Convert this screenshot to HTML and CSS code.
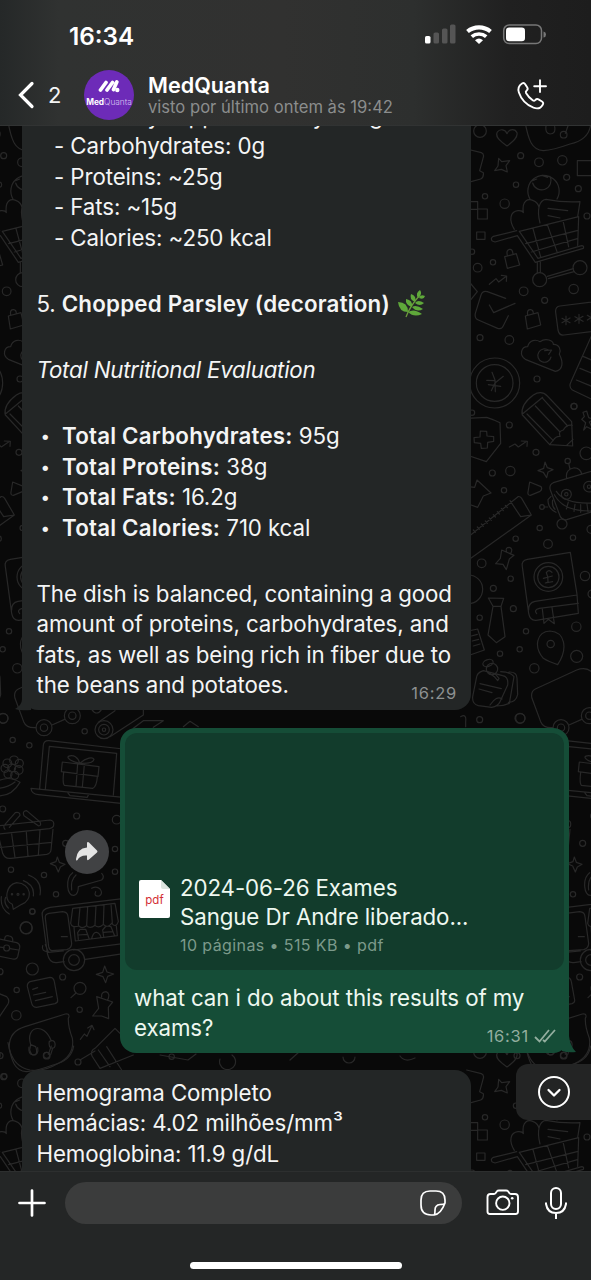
FILE: index.html
```html
<!DOCTYPE html>
<html lang="pt-BR">
<head>
<meta charset="utf-8">
<title>MedQuanta</title>
<link rel="stylesheet" href="styles.css">
</head>
<body>
<div class="phone">
  <svg class="wallpaper" viewBox="0 0 591 1280" aria-hidden="true">
    <defs>
      <g id="tile">
        <g transform="translate(460 120) scale(.33333)">
          <path d="M195 5C205 60 215 90 250 92Q280 90 330 72Q385 60 392 15M258 18Q255 40 270 42Q288 42 284 20M325 15 316 40"/>
          <circle cx="60" cy="33" r="19"/><circle cx="311" cy="44" r="10"/>
          <path d="M141 78C115 60 105 48 112 36C120 25 136 28 141 41C148 24 166 26 171 38C174 52 160 64 141 78Z"/>
          <path d="M20 87 64 98Q74 102 69 115L59 152 70 158Q72 172 62 177L25 187M116 115 125 125 149 122 138 137 142 156 124 148 104 152 114 138Z"/>
          <circle cx="182" cy="107" r="9"/><circle cx="237" cy="127" r="13"/><circle cx="307" cy="121" r="14"/><circle cx="168" cy="194" r="8"/><circle cx="320" cy="172" r="9"/><circle cx="355" cy="206" r="9"/><circle cx="75" cy="229" r="8"/><circle cx="134" cy="251" r="14"/><circle cx="381" cy="288" r="9"/>
          <path d="M352 122H430V167H352ZM53 267H82V297H53ZM24 245H53V268H24M50 336H75V358H50Z"/>
          <path d="M210 237A47 47 0 1 1 291 237M218 189A28 28 0 1 0 270 169M218 182 230 177M246 166 263 172"/>
          <path d="M163 328C146 300 150 275 174 272Q188 271 190 278C185 240 205 235 220 242Q234 248 237 262M240 309C230 270 237 240 258 238Q310 248 360 245L353 290M264 265 323 272M264 287 300 294"/>
          <path d="M170 332 100 349Q90 355 97 363L105 366 172 347 226 427 370 385Q373 377 365 377L234 415 178 334 356 290 353 376M197 371 354 331M214 396 352 356M219 326 242 411M262 314 291 395M309 302 326 381M232 427V458M241 425V457M262 469 340 446M265 476 342 455"/>
          <circle cx="239" cy="479" r="21"/><circle cx="360" cy="443" r="21"/>
          <path d="M134 410 169 401 179 435 142 445ZM142 407Q138 389 149 388Q158 387 159 403M196 588 234 578 242 615 202 627ZM203 585Q200 568 212 569Q220 570 220 581M88 493 108 476 116 486 139 469M124 466 140 468 139 484"/>
          <circle cx="36" cy="395" r="8"/><circle cx="53" cy="443" r="13"/><circle cx="99" cy="427" r="8"/><circle cx="191" cy="514" r="13"/><circle cx="341" cy="507" r="14"/><circle cx="254" cy="541" r="9"/><circle cx="60" cy="653" r="9"/><circle cx="148" cy="660" r="13"/>
          <path d="M28 486 52 515 32 540M137 535 82 515Q68 511 63 525L46 580Q43 595 55 600L113 625Q126 629 130 617L145 587M88 555 101 578 165 550M430 542 300 558Q285 560 287 577L294 630Q298 648 312 645L430 630"/>
          <path d="M318 588V614M306 595 330 608M330 594 306 608M357 583V610M345 590 369 604M369 589 345 604M394 578V606M382 586 406 600M406 585 382 600"/>
          <path d="M196 718C177 705 183 680 203 680C208 660 227 657 240 665C258 652 280 662 280 673C298 672 304 690 298 703C310 725 310 750 286 754ZM266 691A20 20 0 1 0 273 711M254 692 275 690 266 703"/>
          <circle cx="104" cy="789" r="75"/><circle cx="104" cy="789" r="55"/><path d="M96 757 105 780 106 815M130 769 105 789 94 812M80 781 105 782M85 794 122 799"/>
          <circle cx="231" cy="777" r="9"/><circle cx="342" cy="859" r="9"/><circle cx="36" cy="878" r="8"/>
          <path d="M400 635 333 785Q325 801 337 810L410 845M369 709 430 735M360 745 420 770M349 780 410 805"/>
        </g>
        <g transform="translate(460 400) scale(.33333)">
          <path d="M187 45Q180 15 220-15Q245-30 262-12L335 65 338 138 269 134 190 48ZM201 42 280 122M226 18 300 96M248-5 323 78M190 40 248-8M269 134 280 120Q288 108 300 109Q294 93 310 90Q320 72 337 76M319 137 339 118"/>
          <path d="M20 55 80 52Q104 60 120 68L122 130 79 185 20 165M61 93 80 94 81 108 101 110V124L83 127 82 144 64 145 62 130 43 128 42 113 60 111Z"/>
          <circle cx="148" cy="75" r="9"/><circle cx="342" cy="19" r="9"/><circle cx="379" cy="160" r="19"/><circle cx="228" cy="157" r="9"/><circle cx="97" cy="219" r="9"/><circle cx="151" cy="213" r="14"/><circle cx="132" cy="271" r="8"/><circle cx="323" cy="183" r="8"/>
          <path d="M148 141 165 132 175 141 200 124M184 123 202 124 201 139M255 186 262 203 279 209 264 216 260 233 250 217 234 212 251 205ZM209 246 243 260Q248 268 240 274L211 286Q202 286 204 276ZM369 37 380 33 386 53 402 58 388 66 400 90 380 80 371 90 377 68 365 58 373 50Z"/>
          <path d="M25 260 44 262 51 240 93 279 70 288 53 322 25 312M20 415 174 290Q180 288 185 295L214 345 25 480M150 302 182 350 214 345M40 390 46 397M52 381 58 388M64 372 70 379M76 363 82 370M88 354 94 361M100 344 106 351M112 335 118 342M124 325 130 332M136 316 142 323"/>
          <path d="M430 203 280 248Q266 255 271 270L301 350Q308 362 320 359L430 325M320 235Q315 210 340 204Q360 202 365 222M326 190 330 207M273 289 264 299Q263 325 288 337M278 300Q275 320 285 328M252 321H263M283 284Q315 345 430 330M289 274Q320 320 430 306M325 306 319 327M345 313 342 334M362 314V337M381 312 384 335"/>
          <circle cx="319" cy="283" r="15"/><circle cx="319" cy="283" r="5"/><circle cx="387" cy="260" r="16"/><circle cx="387" cy="260" r="5"/><circle cx="246" cy="321" r="7"/><circle cx="306" cy="372" r="15"/><circle cx="239" cy="384" r="8"/><circle cx="339" cy="413" r="8"/><circle cx="264" cy="432" r="13"/><circle cx="167" cy="416" r="8"/><circle cx="393" cy="388" r="12"/>
          <path d="M125 450 162 466 148 477 139 509 129 493 107 491 121 475ZM140 456Q135 442 148 442Q161 446 151 462"/>
          <circle cx="65" cy="490" r="13"/><circle cx="152" cy="536" r="8"/><circle cx="100" cy="565" r="9"/><circle cx="375" cy="528" r="14"/><circle cx="396" cy="582" r="12"/><circle cx="160" cy="626" r="9"/><circle cx="59" cy="653" r="8"/><circle cx="198" cy="694" r="8"/><circle cx="349" cy="680" r="14"/><circle cx="350" cy="769" r="18"/><circle cx="120" cy="761" r="8"/><circle cx="179" cy="748" r="8"/><circle cx="223" cy="805" r="14"/><circle cx="25" cy="568" r="43"/>
          <path d="M187 500Q183 482 202 478L331 457 351 583 355 640 228 661Q210 662 206 640L187 500M206 630Q205 608 225 604L351 585M230 641Q220 630 238 625L355 610M247 627 252 670 265 658 283 671 276 622M276 517Q266 506 259 518Q266 532 264 546L256 549 278 545M250 535 277 528"/>
          <circle cx="265" cy="531" r="43"/><circle cx="265" cy="531" r="32"/>
          <path d="M85 594 131 595 123 619H99ZM99 619 84 705 109 728 135 710 123 619M25 693 53 687 73 750 30 765M34 708 52 703M37 723 56 718M40 738 60 732M293 794Q265 785 250 775C220 740 230 695 270 693C315 696 325 745 293 794Z"/>
          <circle cx="272" cy="732" r="11"/>
          <path d="M70 812Q50 818 49 835L38 890Q36 912 55 917L95 922Q115 918 120 905L143 855Q146 830 128 827L70 812M122 815Q150 815 162 830L148 910Q130 918 110 918M147 816Q171 815 171 835L173 884Q167 908 145 907M60 851 124 866M57 867 96 878M90 915Q110 885 126 897"/>
          <ellipse cx="84" cy="789" rx="16" ry="10" transform="rotate(-20 84 789)"/><circle cx="96" cy="807" r="17"/><path d="M85 817 103 830 113 842 117 835 105 821"/>
          <circle cx="59" cy="959" r="9"/><circle cx="180" cy="955" r="15"/>
          <path d="M2 950Q20 940 17 965V980M279 983Q250 985 242 965L216 895Q211 875 226 867L350 810Q380 798 400 820L450 860M327 975 365 958"/>
          <circle cx="303" cy="983" r="24"/><circle cx="303" cy="983" r="11"/><circle cx="388" cy="947" r="24"/><circle cx="388" cy="947" r="11"/>
        </g>
        <g transform="translate(517 680) scale(.33333)">
          <circle cx="312" cy="149" r="27"/><circle cx="312" cy="149" r="16"/><circle cx="312" cy="149" r="5"/>
          <path d="M295 127 345 92M330 170 430 105V80M275 88Q290 110 305 88M400 145 430 122H490L460 142M550 140 570 124 595 140"/>
          <circle cx="254" cy="154" r="8"/><circle cx="38" cy="180" r="8"/><circle cx="88" cy="196" r="8"/><circle cx="8" cy="387" r="9"/><circle cx="230" cy="408" r="9"/><circle cx="350" cy="419" r="13"/><circle cx="345" cy="507" r="8"/><circle cx="345" cy="575" r="8"/><circle cx="33" cy="569" r="8"/><circle cx="132" cy="585" r="8"/><circle cx="168" cy="643" r="8"/><circle cx="97" cy="694" r="8"/><circle cx="78" cy="743" r="18"/><circle cx="10" cy="115" r="14"/>
          <path d="M119 325 130 195Q132 181 147 182L370 207M136 327 148 199 350 220 340 345M93 325 370 352M93 325Q94 342 115 344L370 371M203 338 210 347 262 352 266 343M187 246 297 260 294 289 184 275ZM191 277Q187 310 193 316L278 325Q290 320 292 290M233 251 228 319M253 254 247 321M239 250C215 245 200 235 205 229C220 222 235 232 239 250C260 232 278 230 282 238C280 248 262 251 239 250"/>
          <circle cx="22" cy="250" r="13"/><circle cx="42" cy="241" r="13"/><circle cx="58" cy="250" r="12"/><circle cx="15" cy="265" r="12"/><circle cx="35" cy="264" r="12"/><circle cx="56" cy="270" r="13"/><circle cx="24" cy="282" r="12"/><circle cx="44" cy="286" r="12"/>
          <path d="M-10 305Q25 285 60 307Q35 350-10 348M-10 325Q20 325 45 306"/>
          <path d="M-10 438 150 420Q163 422 161 435Q161 443 148 446L-10 463M15 448Q8 440 15 433L46 398Q60 395 60 406L28 442M72 407Q66 393 80 392L120 426Q125 437 116 438ZM-5 465 8 520Q15 538 33 535L140 523Q152 520 153 510L159 448M35 462 45 533M79 457 84 530M120 451 115 526M-5 503 155 487"/>
          <path d="M172 531 178 547 195 553 181 561 175 576 167 558 151 551 168 545ZM40 688 37 673C10 660 18 615 50 608C95 610 100 660 65 673ZM70 602Q105 615 100 648M85 585Q128 600 120 645M17 652Q10 670 25 684M4 650Q0 685 28 702"/>
          <circle cx="54" cy="643" r="3"/><circle cx="36" cy="643" r="2"/><circle cx="71" cy="643" r="2"/>
          <path d="M218 578C195 595 200 650 222 646Q235 643 235 620L305 600Q315 590 305 580M228 585Q211 600 215 630M275 625Q290 617 300 627Q310 640 298 648Q280 650 287 635"/>
          <circle cx="197" cy="490" r="9"/>
        </g>
        <g transform="translate(517 900) scale(.33333)">
          <path d="M375-5 150 22Q122 28 127 48L142 160Q148 190 170 188L192 185M256 178 375 160M375 130 220 150M190 153 145 157M128 137Q123 155 145 155L136 134M136 55Q134 42 147 40L188 35Q203 36 204 50L215 130Q215 145 200 149L155 152Q148 150 146 140ZM184 110H202"/>
          <path d="M218 25 345 10 355 65Q348 85 335 70Q322 86 310 73Q296 87 285 76Q270 88 260 77Q245 88 237 78Q215 84 212 70ZM240 22 235 76M263 20 260 76M288 17 285 74M312 14 310 72M333 12 337 70M222 82 226 123 352 107 349 78M235 118 233 98 240 88H257L267 115M275 116Q280 95 290 97Q300 100 303 112M311 110 308 90 318 78 333 80 343 105M235 105 262 103M310 97 338 95"/>
          <circle cx="222" cy="180" r="32"/><circle cx="222" cy="180" r="16"/>
          <circle cx="97" cy="35" r="8"/><circle cx="79" cy="84" r="18"/><circle cx="0" cy="215" r="9"/><circle cx="97" cy="207" r="18"/><circle cx="188" cy="231" r="9"/><circle cx="50" cy="270" r="8"/><circle cx="49" cy="346" r="14"/><circle cx="239" cy="329" r="8"/><circle cx="234" cy="486" r="9"/><circle cx="13" cy="529" r="8"/><circle cx="0" cy="467" r="9"/><circle cx="515" cy="470" r="8"/>
          <path d="M-10 115 50 128Q61 132 59 143L53 170Q50 180 38 177L-10 167M-10 140 12 143M30 146 56 150M14 117Q15 104 28 108Q40 110 38 124"/><circle cx="20" cy="144" r="9"/>
          <path d="M90 245 150 232Q161 232 163 245L173 300Q174 308 165 311L110 322Q98 322 95 310L82 260Q81 249 90 245ZM98 268 113 263M101 285 137 277M106 302 157 290M314 198 321 216 341 222 323 229 317 248 309 230 289 223 308 217Z"/>
          <circle cx="240" cy="265" r="18"/><path d="M228 279 213 293M-10 278 20 290Q30 300 24 312L-5 355M290 290 338 306 325 322 326 356 305 348 278 348 296 325ZM305 291Q303 276 318 275Q332 280 323 300"/>
          <path d="M207 350Q208 339 196 342L75 380Q25 395 28 445Q40 500 90 510Q130 517 175 490Q225 465 217 415Q204 380 205 355ZM92 434C75 380 130 365 153 421M92 434 89 450Q93 468 107 464Q113 455 107 440ZM148 424Q145 438 153 444Q167 447 165 430Q163 418 148 424M158 445 152 464"/><circle cx="140" cy="466" r="9"/>
          <path d="M241 418 253 402 261 409 275 379M263 384 276 376 282 389M276 468Q270 453 285 445L345 385 375 415M276 468 300 505 400 465M295 450 330 500M320 440 365 510"/>
        </g>
      </g>
    </defs>
    <rect width="591" height="1280" fill="#090909"/>
    <g class="doodles">
      <use href="#tile"/>
      <use href="#tile" x="-517"/>
      <use href="#tile" y="921"/>
      <use href="#tile" x="-517" y="921"/>
      <path d="M160 1055l28 5 8-6M220 1059a8 8 0 1 0 12-4M290 1060l9-8M343 1057a6 6 0 0 0 12 0M400 1056q5 7 15 2M80 1060l15-9"/>
    </g>
  </svg>

  <header class="top">
    <div class="status">
      <span class="clock">16:34</span>
      <svg class="status-icons" width="122" height="24" viewBox="0 0 122 24">
        <rect x="1" y="13" width="5.5" height="7.5" rx="1.6" fill="#fff"/>
        <rect x="9.5" y="9.5" width="5.5" height="11" rx="1.6" fill="#555"/>
        <rect x="18" y="5.500" width="5.500" height="15" rx="1.600" fill="#555"/>
        <rect x="26" y="1.500" width="5.500" height="19" rx="1.600" fill="#555"/>
        <path d="M43.500 8.500A18 18 0 0 1 66.500 8.500" fill="none" stroke="#fff" stroke-width="4.200"/>
        <path d="M47.800 13.700A11 11 0 0 1 62.200 13.700" fill="none" stroke="#fff" stroke-width="3.700"/>
        <path d="M51 17.200Q55 13.800 59 17.200L55 21Z" fill="#fff"/>
        <rect x="79.700" y="2" width="37.800" height="18.600" rx="5.500" fill="none" stroke="#777" stroke-width="1.500"/>
        <rect x="82" y="4.500" width="19" height="13.700" rx="3.200" fill="#fff"/>
        <path d="M119.500 8.500Q122 9 122 11.500Q122 14 119.500 14.500Z" fill="#777"/>
      </svg>
    </div>
    <div class="bar">
      <svg class="back" width="18" height="28" viewBox="0 0 18 28"><path d="M14 2.500 2.500 14 14 25.500" fill="none" stroke="#fff" stroke-width="3.200" stroke-linecap="round"/></svg>
      <span class="count">2</span>
      <div class="avatar">
        <svg width="22" height="14" viewBox="0 0 22 14"><path d="M2.500 11 8 3.500M9 11 14.500 3.500M15.500 10.500 18.800 3" fill="none" stroke="#fff" stroke-width="3.700" stroke-linecap="round"/><circle cx="19.300" cy="11" r="2.200" fill="#fff"/></svg>
        <span class="brand"><b>Med</b>Quanta</span>
      </div>
      <div class="who">
        <div class="name">MedQuanta</div>
        <div class="seen">visto por último ontem às 19:42</div>
      </div>
      <svg class="call" width="34" height="34" viewBox="0 0 34 34" fill="none" stroke="#fff" stroke-width="1.900" stroke-linejoin="round" stroke-linecap="round"><path d="M7 5.500Q9 4.300 10.200 6.200L12.300 9.500Q13.300 11.200 11.700 12.500Q10.300 13.800 11 15Q13.500 19.400 18 22.500Q19.200 23.200 20.200 22.200Q21.800 20.500 23.500 21.400L27 23.500Q29 24.700 27.700 26.700Q24.800 32 18.500 29.700Q7.500 25.300 3.900 14.500Q2 8.700 7 5.500ZM25 2.300V14M19.200 8.200H31"/></svg>
    </div>
  </header>

  <main class="chat">
    <section class="bubble in first">
      <p class="line sub cut">- Quantity: Approximately 100g</p>
      <p class="line sub">- Carbohydrates: 0g</p>
      <p class="line sub">- Proteins: ~25g</p>
      <p class="line sub">- Fats: ~15g</p>
      <p class="line sub">- Calories: ~250 kcal</p>
      <p class="line gap item">5. <b>Chopped Parsley (decoration)</b>
        <svg class="herb" width="28" height="28" viewBox="0 0 28 28"><path d="M8 27Q12 16 22 5" stroke="#6c9a3c" stroke-width="1.300" fill="none"/><g fill="#5fa83a"><path d="M20 8Q17 3 22 0Q25 4 20 8Z"/><path d="M17 12Q11 9 13 4Q19 6 17 12Z"/><path d="M21 8Q22 4 27 6Q26 10 21 8Z"/><path d="M17 13Q20 9 26 13Q22 17 17 13Z"/><path d="M14 17Q7 15 8 9Q15 10 14 17Z"/><path d="M14 17Q18 14 25 19Q19 23 14 17Z"/><path d="M10 22Q1 22 0 12Q10 12 10 22Z"/><path d="M10 22Q16 18 24 24Q16 28 10 22Z"/></g></svg></p>
      <p class="line gap"><i>Total Nutritional Evaluation</i></p>
      <ul class="totals">
        <li class="line"><b>Total Carbohydrates:</b> 95g</li>
        <li class="line"><b>Total Proteins:</b> 38g</li>
        <li class="line"><b>Total Fats:</b> 16.2g</li>
        <li class="line"><b>Total Calories:</b> 710 kcal</li>
      </ul>
      <p class="line gap">The dish is balanced, containing a good</p>
      <p class="line">amount of proteins, carbohydrates, and</p>
      <p class="line">fats, as well as being rich in fiber due to</p>
      <div class="last"><p class="line">the beans and potatoes.</p><time class="time">16:29</time></div>
      <svg class="tail-in" width="16" height="22" viewBox="0 0 16 22"><path d="M7 0V10Q7 16 0 20Q5 22 16 21V0Z" fill="#232626"/></svg>
    </section>

    <div class="out-row">
      <span class="forward"><svg width="24" height="22" viewBox="0 0 24 22"><path d="M12 1.500Q13 .5 14 1.500L22 9.500Q23 10.500 22 11.500L14 18.500Q12 20 12 18V14.500Q5 14 2.500 19Q1 20.500 1 18Q2 7.500 12 6.500Z" fill="#e4e4e4"/></svg></span>
      <section class="bubble out">
        <div class="document">
          <svg width="31" height="38" viewBox="0 0 31 38"><path d="M2 0H22L31 9V36Q31 38 29 38H2Q0 38 0 36V2Q0 0 2 0Z" fill="#fff"/><path d="M22 0 31 9H24Q22 9 22 7Z" fill="#dce5df"/><text x="15.500" y="23.500" text-anchor="middle" class="ext">pdf</text></svg>
          <div class="file">
            <div class="file-name">2024-06-26 Exames</div>
            <div class="file-name second">Sangue Dr Andre liberado...</div>
            <div class="meta">10 páginas • 515 KB • pdf</div>
          </div>
        </div>
        <div class="caption">
          <p class="line">what can i do about this results of my</p>
          <div class="last"><p class="line">exams?</p><time class="time sent">16:31 <svg width="22" height="14" viewBox="0 0 22 14" fill="none" stroke="#93ae9f" stroke-width="1.800"><path d="M1 8 5.500 12.500 15 1M9 11 10.800 12.500 21 1"/></svg></time></div>
        </div>
        <svg class="tail-out" width="14" height="22" viewBox="0 0 14 22"><path d="M0 0H7V5Q8 15 14 21Q6 22 0 20Z" fill="#154d37"/></svg>
      </section>
    </div>

    <section class="bubble in lab">
      <p class="line">Hemograma Completo</p>
      <p class="line">Hemácias: 4.02 milhões/mm³</p>
      <p class="line">Hemoglobina: 11.9 g/dL</p>
    </section>
    <div class="jump"><svg width="34" height="34" viewBox="0 0 34 34" fill="none" stroke="#fff" stroke-width="2" stroke-linecap="round" stroke-linejoin="round"><circle cx="17" cy="17" r="15"/><path d="M11.500 15 17 20.500 22.500 15" stroke-width="2.300"/></svg></div>
  </main>

  <footer class="bottom">
    <div class="composer">
      <svg class="plus" width="28" height="28" viewBox="0 0 28 28"><path d="M14 1.500V26.500M1.500 14H26.500" stroke="#fff" stroke-width="2.700" stroke-linecap="round"/></svg>
      <div class="field"><svg width="28" height="28" viewBox="0 0 28 28" fill="none" stroke="#fff" stroke-width="1.700" stroke-linejoin="round"><path d="M15 26H12Q2 26 2 16V11Q2 2 11 2H17Q26 2 26 11V14Q22 25 15 26ZM15 26Q16 25.500 16 21Q16 16 21 15.500Q25.500 15.500 26 14"/></svg></div>
      <svg class="camera" width="34" height="28" viewBox="0 0 34 28" fill="none" stroke="#fff" stroke-width="1.900" stroke-linejoin="round"><path d="M4.500 5H8Q9 5 9.700 4L11 2.200Q11.500 1.500 13 1.500H20Q21.500 1.500 22 2.200L23.300 4Q24 5 25 5H29Q32 5 32 8V22.500Q32 25 29.500 25H4Q1.500 25 1.500 22.500V8Q1.500 5 4.500 5Z"/><circle cx="16.800" cy="14.200" r="6.700"/><circle cx="26.200" cy="9.300" r="1.300" fill="#fff" stroke="none"/></svg>
      <svg class="mic" width="24" height="34" viewBox="0 0 24 34" fill="none" stroke="#fff" stroke-width="2"><rect x="7" y="2" width="10" height="21" rx="5"/><path d="M2 16.500V18Q3.500 27 12 27Q20.500 27 22 18V16.500M12 27V33"/></svg>
    </div>
    <div class="home"></div>
  </footer>
</div>
</body>
</html>
```

FILE: styles.css
```css
* { box-sizing: border-box; }
body { margin: 0; background: #090909; }
p, ul { margin: 0; padding: 0; }
svg { display: block; flex: none; }
.phone {
  position: relative;
  width: 591px;
  height: 1280px;
  display: flex;
  flex-direction: column;
  overflow: hidden;
  color: #f4f5f5;
  font-family: Inter, "Liberation Sans", sans-serif;
  font-size: 22.3px;
}
.wallpaper { position: absolute; inset: 0; width: 591px; height: 1280px; }
.doodles { fill: none; stroke: #282828; stroke-width: 3.6; stroke-linejoin: round; stroke-linecap: round; }
.doodles > path { stroke-width: 1.2; }

.top {
  position: relative;
  z-index: 2;
  height: 126px;
  flex: none;
  background: linear-gradient(90deg, #252828 0, #303231 10%, #313130 48%, #2d2f2e 70%, #202020 86%, #1d1d1d 100%);
  border-bottom: 1px solid #313333;
}
.status { height: 64px; padding: 23px 45px 0 69px; display: flex; justify-content: space-between; align-items: flex-start; }
.clock { font-size: 24.3px; line-height: 26px; font-weight: 600; color: #fff; }
.bar { height: 62px; display: flex; align-items: center; padding: 0 42px 0 18px; }
.back { margin-right: 12px; }
.count { width: 36px; font-size: 22px; line-height: 28px; }
.avatar {
  width: 50px; height: 50px; border-radius: 50%; background: #6d2bb8;
  display: flex; flex-direction: column; align-items: center; padding-top: 9px; gap: 3px;
}
.brand { font-size: 8.3px; line-height: 12px; color: #d9c5f1; font-weight: 300; }
.brand b { color: #fff; font-weight: 700; }
.who { margin-left: 14px; flex: 1; }
.name { font-size: 21.6px; line-height: 24px; font-weight: 600; color: #fff; }
.seen { font-size: 16.6px; line-height: 21px; color: #8b8d8d; white-space: nowrap; }

.chat { position: relative; flex: 1; min-height: 0; overflow: hidden; display: flex; flex-direction: column; }
.bubble { position: relative; }
.in { width: 449px; margin-left: 22px; background: #232626; border-radius: 16px; padding-left: 14.5px; flex: none; }
.first { height: 600px; margin-top: -16px; }
.line { height: 30.4px; line-height: 30.4px; white-space: nowrap; letter-spacing: -.1px; }
.line b { font-weight: 600; letter-spacing: .22px; }
.line i { letter-spacing: -.23px; }
.sub { padding-left: 17.5px; }
.gap { margin-top: 36px; }
.cut { margin-top: -9px; letter-spacing: .08px; }
.item { display: flex; align-items: center; gap: 6px; }
.herb { margin-left: 2px; }
.totals { list-style: none; margin-top: 35.7px; }
.totals li { padding-left: 25.5px; }
.totals li::before { content: "•"; float: left; width: 21.5px; margin-left: -21.5px; font-size: 17px; }
.last { display: flex; justify-content: space-between; padding-right: 14px; }
.time { font-size: 16.5px; line-height: 20px; color: #8d9191; margin-top: 13px; letter-spacing: .75px; }
.tail-in { position: absolute; left: -7px; bottom: -1px; }

.out-row { margin-top: 18px; display: flex; align-items: flex-start; gap: 11px; padding-left: 65px; flex: none; }
.forward { width: 44px; height: 44px; margin-top: 102px; border-radius: 50%; background: #414244; display: flex; align-items: center; justify-content: center; }
.out { width: 449px; height: 325px; padding: 5px 5px 0; background: #154d37; border-radius: 16px; color: #eef8f0; }
.document { height: 237px; background: #123c2c; border-radius: 12px; display: flex; align-items: flex-start; padding: 147px 0 0 14px; gap: 10px; }
.ext { font: 11.5px Inter, sans-serif; fill: #d32f36; }
.file { margin-top: -6px; }
.file-name { line-height: 28.5px; white-space: nowrap; letter-spacing: -.1px; }
.meta { margin-top: 3px; font-size: 16px; line-height: 22px; color: #7c9a8b; letter-spacing: .4px; }
.caption { padding: 13px 0 0 9px; }
.caption .last { padding-right: 8px; }
.sent { display: flex; gap: 5px; color: #93ae9f; align-items: center; }
.tail-out { position: absolute; right: -7px; bottom: 0; }
.lab { height: 130px; margin-top: 17px; padding-top: 8px; }
.jump { position: absolute; right: 0; top: 938px; width: 75px; height: 56px; border-radius: 12px 0 0 12px; background: #232424; display: flex; align-items: center; padding-left: 21px; }

.bottom { position: relative; height: 109px; flex: none; background: #242626; border-top: 1px solid #2d2f2f; }
.composer { height: 62px; display: flex; align-items: center; padding: 0 23px 0 18px; }
.field { width: 397px; height: 42px; margin-left: 19px; background: #3b3c3c; border-radius: 21px; display: flex; align-items: center; justify-content: flex-end; padding-right: 15px; }
.camera { margin-left: 24px; }
.mic { margin-left: auto; }
.home { width: 212px; height: 7px; margin: 28px auto 0; border-radius: 4px; background: #fff; }
```
